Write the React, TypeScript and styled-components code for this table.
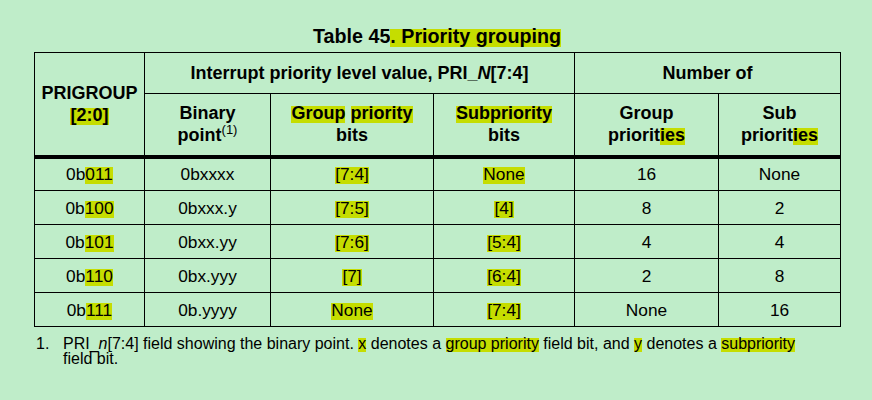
import styled, { createGlobalStyle } from "styled-components";

const GlobalStyle = createGlobalStyle`
  html, body {
    margin: 0;
    padding: 0;
    background: #bfedc9;
  }

  body {
    font-family: "Liberation Sans", Arial, sans-serif;
    color: #000;
  }
`;

const Page = styled.div`
  box-sizing: border-box;
  width: 872px;
  height: 400px;
  padding: 25px 0 0 34px;
  background: #bfedc9;
`;

const Wrapper = styled.div`
  width: 806px;
`;

const Caption = styled.div`
  text-align: center;
  font-size: 19.7px;
  font-weight: 700;
  line-height: 22px;
  margin-bottom: 5px;
`;

const Hl = styled.span`
  background: linear-gradient(transparent 17%, #c5dd00 17%);
`;

const Table = styled.table`
  width: 806px;
  border-collapse: collapse;
  table-layout: fixed;
`;

const HeadRow = styled.tr<{ $height: number }>`
  height: ${({ $height }) => $height}px;
`;

const HeadCell = styled.th<{ $thick?: boolean }>`
  border: 1px solid #000;
  border-bottom: ${({ $thick }) => ($thick ? "4px" : "1px")} solid #000;
  padding: 0;
  font-size: 18px;
  font-weight: 700;
  line-height: 22px;
  text-align: center;
  vertical-align: middle;
`;

const Sup = styled.sup`
  font-size: 13px;
  font-weight: 400;
  line-height: 0;
  vertical-align: 7px;
`;

const BodyRow = styled.tr`
  height: 34px;
`;

const Cell = styled.td`
  border: 1px solid #000;
  padding: 0;
  font-size: 17.3px;
  line-height: 20px;
  text-align: center;
  vertical-align: middle;
`;

const Note = styled.div`
  display: flex;
  margin-top: 9px;
  font-size: 16px;
  line-height: 15px;
`;

const NoteNum = styled.span`
  width: 29px;
  padding-left: 2px;
  box-sizing: border-box;
  flex: none;
`;

const NoteText = styled.span`
  flex: 1;
`;

type Row = {
  group: string;
  point: string;
  groupBits: string;
  subBits: string;
  groups: string;
  subs: string;
};

const rows: Row[] = [
  { group: "011", point: "0bxxxx", groupBits: "[7:4]", subBits: "None", groups: "16", subs: "None" },
  { group: "100", point: "0bxxx.y", groupBits: "[7:5]", subBits: "[4]", groups: "8", subs: "2" },
  { group: "101", point: "0bxx.yy", groupBits: "[7:6]", subBits: "[5:4]", groups: "4", subs: "4" },
  { group: "110", point: "0bx.yyy", groupBits: "[7]", subBits: "[6:4]", groups: "2", subs: "8" },
  { group: "111", point: "0b.yyyy", groupBits: "None", subBits: "[7:4]", groups: "None", subs: "16" },
];

const widths = [110, 126, 163, 141, 144, 122];

export default function App() {
  return (
    <Page>
      <GlobalStyle />
      <Wrapper>
        <Caption>
          Table 45<Hl>. Priority grouping</Hl>
        </Caption>

        <Table>
          <colgroup>
            {widths.map((w, i) => (
              <col key={i} style={{ width: w }} />
            ))}
          </colgroup>
          <thead>
            <HeadRow $height={41}>
              <HeadCell rowSpan={2} $thick>
                PRIGROUP
                <br />
                <Hl>[2:0]</Hl>
              </HeadCell>
              <HeadCell colSpan={3}>
                Interrupt priority level value, PRI_<i>N</i>[7:4]
              </HeadCell>
              <HeadCell colSpan={2}>Number of</HeadCell>
            </HeadRow>
            <HeadRow $height={63}>
              <HeadCell $thick>
                Binary
                <br />
                point<Sup>(1)</Sup>
              </HeadCell>
              <HeadCell $thick>
                <Hl>Group</Hl> <Hl>priority</Hl>
                <br />
                bits
              </HeadCell>
              <HeadCell $thick>
                <Hl>Subpriority</Hl>
                <br />
                bits
              </HeadCell>
              <HeadCell $thick>
                Group
                <br />
                priorit<Hl>ies</Hl>
              </HeadCell>
              <HeadCell $thick>
                Sub
                <br />
                priorit<Hl>ies</Hl>
              </HeadCell>
            </HeadRow>
          </thead>
          <tbody>
            {rows.map((row) => (
              <BodyRow key={row.group}>
                <Cell>
                  0b<Hl>{row.group}</Hl>
                </Cell>
                <Cell>{row.point}</Cell>
                <Cell>
                  <Hl>{row.groupBits}</Hl>
                </Cell>
                <Cell>
                  <Hl>{row.subBits}</Hl>
                </Cell>
                <Cell>{row.groups}</Cell>
                <Cell>{row.subs}</Cell>
              </BodyRow>
            ))}
          </tbody>
        </Table>

        <Note>
          <NoteNum>1.</NoteNum>
          <NoteText>
            PRI_<i>n</i>[7:4] field showing the binary point. <Hl>x</Hl> denotes a{" "}
            <Hl>group priority</Hl> field bit, and <Hl>y</Hl> denotes a{" "}
            <Hl>subpriority</Hl>
            <br />
            field bit.
          </NoteText>
        </Note>
      </Wrapper>
    </Page>
  );
}
